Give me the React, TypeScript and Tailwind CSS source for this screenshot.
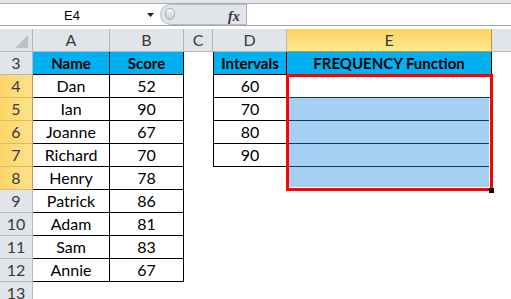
import React from "react";

const FONT = { fontFamily: "Lato, 'Open Sans', sans-serif" };

type CellProps = {
  w: string;
  children?: React.ReactNode;
  className?: string;
};

function Cell({ w, children, className = "" }: CellProps) {
  return (
    <div className={`${w} h-[23px] shrink-0 flex items-center justify-center text-[16px] text-black ${className}`}>
      {children}
    </div>
  );
}

const rows: { n: number; a: string; b: string; d?: string }[] = [
  { n: 4, a: "Dan", b: "52", d: "60" },
  { n: 5, a: "Ian", b: "90", d: "70" },
  { n: 6, a: "Joanne", b: "67", d: "80" },
  { n: 7, a: "Richard", b: "70", d: "90" },
  { n: 8, a: "Henry", b: "78" },
  { n: 9, a: "Patrick", b: "86" },
  { n: 10, a: "Adam", b: "81" },
  { n: 11, a: "Sam", b: "83" },
  { n: 12, a: "Annie", b: "67" },
];

function RowHeader({ n, selected }: { n: number; selected?: boolean }) {
  return (
    <div
      className={`w-[33px] h-[23px] shrink-0 flex items-center justify-center text-[16px] text-[#3a3a3a] border-r border-b ${
        selected
          ? "bg-gradient-to-r from-[#fbd667] to-[#fde08a] border-r-[#c59a4a] border-b-[#e5b85c]"
          : "bg-[#e1e4e8] border-[#b4b8be]"
      }`}
    >
      {n}
    </div>
  );
}

export default function App() {
  return (
    <div className="w-[511px] h-[299px] overflow-hidden bg-white" style={FONT}>
      {/* top strip */}
      <div className="h-[4px] bg-[#e3e6ea] border-b border-[#a9adb3]" />
      {/* formula bar */}
      <div className="flex h-[21px]">
        <div className="w-[160px] relative bg-white">
          <span className="absolute left-[64px] top-[2px] text-[13px] text-black" style={{ fontFamily: "'Liberation Sans', sans-serif" }}>
            E4
          </span>
          <svg className="absolute left-[147px] top-[9px]" width="8" height="5" viewBox="0 0 8 5">
            <path d="M0 0 L7 0 L3.5 4 Z" fill="#222" />
          </svg>
        </div>
        <div className="w-[86px] relative bg-[#e1e4e8] rounded-l-[11px] border border-r-0 border-[#b9bdc3]">
          <div className="absolute left-[4px] top-[3px] w-[10px] h-[12px] rounded-full bg-gradient-to-b from-[#f4f5f7] to-[#c9cdd2] border border-[#a9adb3]" />
          <span
            className="absolute left-[67px] top-[1px] text-[14px] italic font-bold text-[#333]"
            style={{ fontFamily: "'Liberation Serif', serif" }}
          >
            fx
          </span>
        </div>
        <div className="flex-1 bg-white border-l border-[#a9adb3]" />
      </div>
      <div className="h-px bg-[#a0a4aa]" />
      <div className="h-[3px] bg-white" />

      {/* sheet */}
      <div className="relative">
        {/* column headers */}
        <div className="flex h-[23px] text-[16px] text-[#3a3a3a]">
          <div className="w-[33px] shrink-0 bg-[#e1e4e8] border-r border-b border-[#b4b8be] relative">
            <svg className="absolute left-[15px] top-[6px]" width="14" height="14" viewBox="0 0 14 14">
              <path d="M13 0 L13 13 L0 13 Z" fill="#bcc0c6" />
            </svg>
          </div>
          <div className="w-[77px] shrink-0 bg-[#e1e4e8] border-r border-b border-[#b4b8be] flex items-center justify-center">A</div>
          <div className="w-[74px] shrink-0 bg-[#e1e4e8] border-r border-b border-[#b4b8be] flex items-center justify-center">B</div>
          <div className="w-[29px] shrink-0 bg-[#e1e4e8] border-r border-b border-[#b4b8be] flex items-center justify-center">C</div>
          <div className="w-[74px] shrink-0 bg-[#e1e4e8] border-r border-b border-[#b4b8be] flex items-center justify-center">D</div>
          <div className="w-[205px] shrink-0 bg-gradient-to-b from-[#f9d360] to-[#feea8e] border-r border-b border-[#c4922f] flex items-center justify-center">E</div>
          <div className="flex-1 bg-[#e1e4e8] border-b border-[#b4b8be]" />
        </div>

        {/* row 3 */}
        <div className="flex">
          <RowHeader n={3} />
          <Cell w="w-[77px]" className="bg-[#00b0f0] font-bold !text-[15px] border-r border-b border-black">Name</Cell>
          <Cell w="w-[74px]" className="bg-[#00b0f0] font-bold !text-[15px] border-r border-b border-black">Score</Cell>
          <Cell w="w-[29px]" className="bg-white" />
          <Cell w="w-[74px]" className="bg-[#00b0f0] font-bold !text-[15px] border-l border-r border-b border-black">Intervals</Cell>
          <Cell w="w-[205px]" className="bg-[#00b0f0] font-bold !text-[15px] border-r border-b border-black">FREQUENCY Function</Cell>
        </div>

        {rows.map((r) => {
          const sel = r.n >= 4 && r.n <= 8;
          const hasD = r.n <= 7;
          let eClass = "bg-white";
          if (r.n === 4) eClass = "bg-white border-b border-[#17365d]";
          else if (r.n >= 5 && r.n <= 7) eClass = "bg-[#a6d0f1] border-b border-[#17365d]";
          else if (r.n === 8) eClass = "bg-[#a6d0f1]";
          return (
            <div className="flex" key={r.n}>
              <RowHeader n={r.n} selected={sel} />
              <Cell w="w-[77px]" className="bg-white border-r border-b border-black">{r.a}</Cell>
              <Cell w="w-[74px]" className="bg-white border-r border-b border-black">{r.b}</Cell>
              <Cell w="w-[29px]" className="bg-white" />
              <Cell w="w-[74px]" className={hasD ? "bg-white border-l border-r border-b border-black" : "bg-white"}>
                {r.d}
              </Cell>
              <Cell w="w-[205px]" className={eClass} />
            </div>
          );
        })}

        {/* row 13 */}
        <div className="flex">
          <RowHeader n={13} />
          <div className="flex-1 bg-white" />
        </div>

        {/* selection frame (annotation) */}
        <div className="absolute left-[286px] top-[45px] w-[207px] h-[117px] border-[3px] border-[#ff0000]">
          <div className="absolute right-0 bottom-0 top-[21px] w-px bg-white" />
          <div className="absolute left-0 right-0 bottom-0 h-px bg-white" />
        </div>
        <div className="absolute left-[489px] top-[159px] w-[5px] h-[5px] bg-black" />
      </div>
    </div>
  );
}
